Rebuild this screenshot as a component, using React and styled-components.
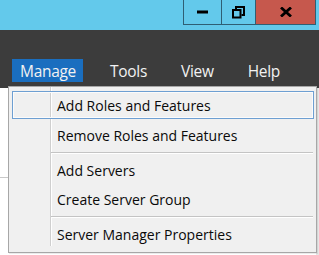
import React from 'react'
import styled, { createGlobalStyle } from 'styled-components'

const Global = createGlobalStyle`
  html, body {
    margin: 0;
    padding: 0;
    width: 319px;
    height: 255px;
    overflow: hidden;
    background: #ffffff;
  }
  * { box-sizing: border-box; }
`

const Window = styled.div`
  position: relative;
  width: 319px;
  height: 255px;
  font-family: "Open Sans", "Noto Sans", sans-serif;
  display: flex;
  flex-direction: column;
`

const TitleStrip = styled.div`
  height: 30px;
  background: #63c9eb;
  display: flex;
  justify-content: flex-end;
  align-items: flex-start;
  padding-right: 3px;
`

const Caption = styled.div`
  display: flex;
  height: 25px;
  border: 1px solid #2f5f74;
  border-top: none;
`

const CaptionButton = styled.div`
  width: ${p => p.$w}px;
  height: 100%;
  display: flex;
  align-items: center;
  justify-content: center;
  background: ${p => (p.$close ? '#c6584d' : '#63c9eb')};
  border-left: ${p => (p.$first ? 'none' : '1px solid #2f5f74')};
`

const MenuBar = styled.div`
  height: 58px;
  background: #3c3c3c;
  display: flex;
  align-items: flex-end;
  gap: 19px;
  padding: 0 0 6px 12px;
`

const MenuTitle = styled.div`
  height: 23px;
  padding: 0 7px 0 8px;
  display: flex;
  align-items: center;
  font-size: 15.5px;
  letter-spacing: -0.3px;
  color: #f2f2f2;
  background: ${p => (p.$active ? '#1a6ebf' : 'transparent')};
`

const Content = styled.div`
  flex: 1;
  background: #ffffff;
  display: flex;
  justify-content: space-between;
`

const ContentBand = styled.div`
  height: 90px;
  border-bottom: 1px solid #c8c8c8;
  width: 10px;
`

const ContentEdge = styled.div`
  width: 3px;
  background: #e6e6e6;
`

const Dropdown = styled.div`
  position: absolute;
  left: 8px;
  top: 86px;
  width: 309px;
  height: 167px;
  border: 1px solid #a7a7a7;
  padding: 5px 1px 2px 1px;
  background:
    linear-gradient(to right,
      #f0f0f0 0, #f0f0f0 41px,
      #cfcfcf 41px, #cfcfcf 42px,
      #ffffff 42px, #ffffff 43px,
      #f0f0f0 43px) 0 0 / 100% 159px no-repeat,
    #f0f0f0;
  box-shadow: 1px 1px 0 rgba(0, 0, 0, 0.08);
`

const Item = styled.div`
  height: 29px;
  display: flex;
  align-items: center;
  font-size: 14px;
  color: #0a0a0a;
  padding-left: 47px;
  ${p =>
    p.$hover &&
    `
    height: 28px;
    margin: -1px 1px 2px 2px;
    padding-left: 44px;
    border: 1px solid #6e9fd2;
    box-shadow: inset 0 0 0 1px #fbfbfb;
  `}
`

const Separator = styled.div`
  height: 6px;
  margin-left: 41px;
  margin-right: 2px;
  display: flex;
  flex-direction: column;
  justify-content: center;
  &::before {
    content: "";
    height: 1px;
    background: #c4c4c4;
  }
  &::after {
    content: "";
    height: 1px;
    background: #ffffff;
  }
`

const MinIcon = () => (
  <svg width="11" height="4" viewBox="0 0 11 4">
    <rect x="0" y="0.5" width="11" height="3" fill="#000" />
  </svg>
)

const RestoreIcon = () => (
  <svg width="13" height="13" viewBox="0 0 13 13">
    <rect x="1" y="4" width="7.5" height="7.5" fill="none" stroke="#000" strokeWidth="2" />
    <path d="M4 3.5 V1 H12 V9 H9.5" fill="none" stroke="#000" strokeWidth="2" />
  </svg>
)

const CloseIcon = () => (
  <svg width="12" height="10" viewBox="0 0 12 10">
    <path d="M1 0.5 L11 9.5 M11 0.5 L1 9.5" stroke="#000" strokeWidth="2.8" />
  </svg>
)

const App = () => {
  return (
    <Window>
      <Global />
      <TitleStrip>
        <Caption>
          <CaptionButton $w={37} $first>
            <MinIcon />
          </CaptionButton>
          <CaptionButton $w={34}>
            <RestoreIcon />
          </CaptionButton>
          <CaptionButton $w={60} $close>
            <CloseIcon />
          </CaptionButton>
        </Caption>
      </TitleStrip>
      <MenuBar>
        <MenuTitle $active>Manage</MenuTitle>
        <MenuTitle>Tools</MenuTitle>
        <MenuTitle>View</MenuTitle>
        <MenuTitle>Help</MenuTitle>
      </MenuBar>
      <Content>
        <ContentBand />
        <ContentEdge />
      </Content>
      <Dropdown>
        <Item $hover>Add Roles and Features</Item>
        <Item>Remove Roles and Features</Item>
        <Separator />
        <Item>Add Servers</Item>
        <Item>Create Server Group</Item>
        <Separator />
        <Item>Server Manager Properties</Item>
      </Dropdown>
    </Window>
  )
}

export default App
